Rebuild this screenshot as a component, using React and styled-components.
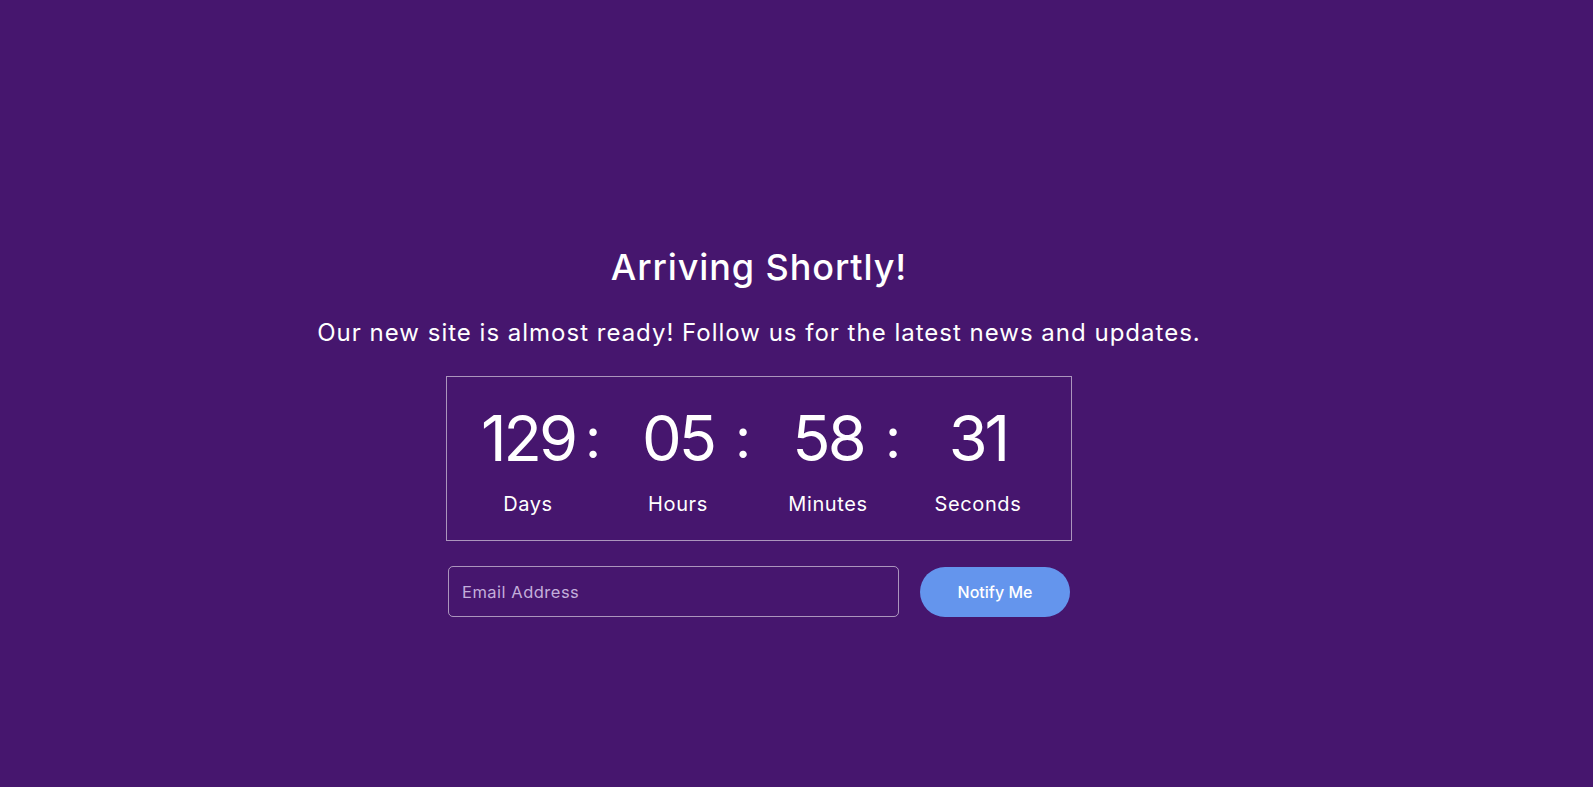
import React from "react"
import styled, { createGlobalStyle } from "styled-components"

const GlobalStyle = createGlobalStyle`
    html, body {
        margin: 0;
        padding: 0;
        background: #46166e;
    }
    * {
        box-sizing: border-box;
    }
`

const Page = styled.main`
    min-height: 100vh;
    background: #46166e;
    color: #ffffff;
    font-family: Inter, "Noto Sans", sans-serif;
    display: flex;
    justify-content: center;
    padding: 242px 75px 0 0;
`

const Content = styled.section`
    display: flex;
    flex-direction: column;
    align-items: center;
`

const Title = styled.h1`
    margin: 0;
    font-size: 36px;
    font-weight: 500;
    line-height: 50px;
    letter-spacing: 0.9px;
`

const Subtitle = styled.p`
    margin: 24px 0 0;
    font-size: 24px;
    font-weight: 400;
    line-height: 34px;
    letter-spacing: 1px;
`

const Countdown = styled.div`
    margin-top: 26px;
    width: 626px;
    height: 165px;
    border: 1px solid rgba(255, 255, 255, 0.55);
    display: grid;
    grid-template-columns: repeat(4, 150px);
    padding: 24px 20px 0 6px;
`

const Unit = styled.div`
    position: relative;
    display: flex;
    flex-direction: column;
    align-items: center;
`

const Value = styled.span`
    font-size: 63px;
    font-weight: 400;
    line-height: 74px;
    letter-spacing: -3px;
`

const Colon = styled.span`
    position: absolute;
    left: calc(50% + 57px);
    top: 0;
    font-size: 56px;
    line-height: 74px;
`

const Label = styled.span`
    margin-top: 17px;
    font-size: 20px;
    line-height: 24px;
    letter-spacing: 0.6px;
`

const Form = styled.form`
    margin-top: 25px;
    display: flex;
    align-items: center;
    gap: 21px;
`

const EmailInput = styled.input`
    width: 451px;
    height: 51px;
    border: 1px solid rgba(255, 255, 255, 0.55);
    border-radius: 5px;
    background: transparent;
    color: #ffffff;
    padding: 0 13px;
    font-family: Inter, "Noto Sans", sans-serif;
    font-size: 16.5px;
    letter-spacing: 0.5px;
    outline: none;
    &::placeholder {
        color: #c3aedb;
    }
`

const NotifyButton = styled.button`
    width: 150px;
    height: 50px;
    border: none;
    border-radius: 25px;
    background: #6495ed;
    color: #ffffff;
    font-family: Inter, "Noto Sans", sans-serif;
    font-size: 16px;
    font-weight: 500;
    cursor: pointer;
`

const units = [
    { value: "129", label: "Days" },
    { value: "05", label: "Hours" },
    { value: "58", label: "Minutes" },
    { value: "31", label: "Seconds" },
]

const App = () => {
    return (
        <Page>
            <GlobalStyle />
            <Content>
                <Title>Arriving Shortly!</Title>
                <Subtitle>Our new site is almost ready! Follow us for the latest news and updates.</Subtitle>
                <Countdown>
                    {units.map((unit, i) => (
                        <Unit key={unit.label}>
                            <Value>{unit.value}</Value>
                            {i < units.length - 1 && <Colon>:</Colon>}
                            <Label>{unit.label}</Label>
                        </Unit>
                    ))}
                </Countdown>
                <Form onSubmit={e => e.preventDefault()}>
                    <EmailInput type="email" placeholder="Email Address" />
                    <NotifyButton type="submit">Notify Me</NotifyButton>
                </Form>
            </Content>
        </Page>
    )
}

export default App
